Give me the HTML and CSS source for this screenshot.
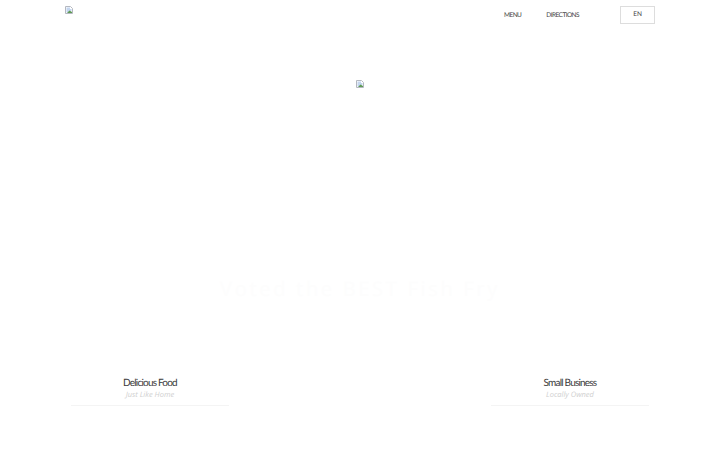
FILE: index.html
```html
<!DOCTYPE html>
<html lang="en">
<head>
    <meta charset="UTF-8">
    <title>Fish Fry</title>
    <link rel="stylesheet" href="styles.css">
</head>
<body>
    <header class="topbar">
        <svg class="broken" width="8" height="8" viewBox="0 0 8 8">
            <path d="M0.5 0.5H5.5L7.5 2.5V7.5H0.5Z" fill="#fff" stroke="#b4b8c0"/>
            <path d="M1.5 1.5H5V3H6.5V4.5L4 6.5H1.5Z" fill="#c4d6f0"/>
            <path d="M2 7L4.5 4.5L7 6V7Z" fill="#5f9a55"/>
        </svg>
        <nav class="nav">
            <a class="nav-link" href="#">MENU</a>
            <a class="nav-link" href="#">DIRECTIONS</a>
        </nav>
        <button class="lang">EN</button>
    </header>

    <section class="hero">
        <svg class="broken" width="8" height="8" viewBox="0 0 8 8">
            <path d="M0.5 0.5H5.5L7.5 2.5V7.5H0.5Z" fill="#fff" stroke="#b4b8c0"/>
            <path d="M1.5 1.5H5V3H6.5V4.5L4 6.5H1.5Z" fill="#c4d6f0"/>
            <path d="M2 7L4.5 4.5L7 6V7Z" fill="#5f9a55"/>
        </svg>
        <h1 class="tagline">Voted the BEST Fish Fry</h1>
    </section>

    <section class="features">
        <div class="feature">
            <h2 class="feature-title">Delicious Food</h2>
            <p class="feature-sub">Just Like Home</p>
        </div>
        <div class="feature">
            <h2 class="feature-title">Small Business</h2>
            <p class="feature-sub">Locally Owned</p>
        </div>
    </section>
</body>
</html>
```

FILE: styles.css
```css
body {
    margin: 0;
    background-color: #fff;
    font-family: "Lato", sans-serif;
    color: #222;
    text-rendering: geometricPrecision;
}

.broken {
    display: block;
}

.topbar {
    display: flex;
    align-items: flex-start;
    justify-content: space-between;
    box-sizing: border-box;
    height: 80px;
    padding: 6px 65px 0;
}

.nav {
    display: flex;
    gap: 25px;
    margin-left: auto;
    margin-right: 41px;
    padding-top: 4px;
}

.nav-link {
    font-size: 6.5px;
    line-height: 11px;
    letter-spacing: -0.55px;
    color: #444;
    text-decoration: none;
}

.lang {
    width: 35px;
    height: 18px;
    padding: 0 0 1px;
    font-family: "Lato", sans-serif;
    font-size: 6.5px;
    letter-spacing: -0.2px;
    color: #444;
    background-color: #fff;
    border: 1px solid #ddd;
    text-rendering: geometricPrecision;
}

.hero {
    display: flex;
    flex-direction: column;
    align-items: center;
    box-sizing: border-box;
    height: 293px;
}

.tagline {
    margin: 186px 0 0;
    font-family: "Open Sans", sans-serif;
    font-size: 20px;
    font-weight: 400;
    line-height: 30px;
    letter-spacing: 2.7px;
    color: #fdfdfd;
}

.features {
    display: flex;
    justify-content: space-between;
    padding: 0 71px;
}

.feature {
    width: 158px;
    height: 28px;
    padding-top: 4px;
    text-align: center;
    border-bottom: 1px solid #f4f4f4;
}

.feature-title {
    margin: 0;
    font-size: 10px;
    font-weight: 400;
    line-height: 13px;
    letter-spacing: -0.8px;
    color: #3a3a3a;
}

.feature-sub {
    margin: 0;
    font-family: "Open Sans", sans-serif;
    font-size: 7.5px;
    font-style: italic;
    line-height: 10px;
    color: #d0d0d0;
}
```
